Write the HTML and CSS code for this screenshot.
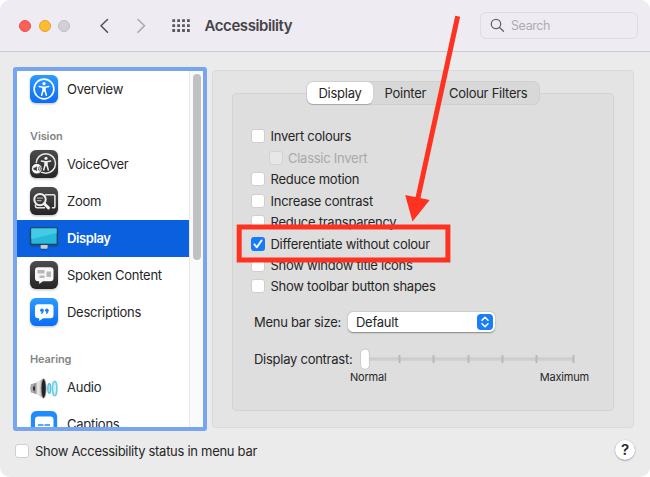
FILE: index.html
```html
<!DOCTYPE html>
<html lang="en-GB">
<head>
  <meta charset="UTF-8" />
  <meta name="viewport" content="width=device-width, initial-scale=1.0" />
  <title>Accessibility</title>
  <link rel="stylesheet" href="styles.css">
</head>
<body>
<div class="window">
  <header class="titlebar">
    <div class="lights"><i class="close"></i><i class="minimise"></i><i class="zoom"></i></div>
    <svg class="nav" width="60" height="20" viewBox="0 0 60 20" fill="none" stroke-width="1.6" stroke-linecap="round" stroke-linejoin="round">
      <path d="M13.500 3.500 7 9.800l6.500 6.500" stroke="#555"/>
      <path d="M44 3.500l6.500 6.300L44 16.300" stroke="#aaa"/>
    </svg>
    <svg class="grid" width="18" height="14" viewBox="0 0 18 14" stroke="#5a585c" stroke-width="2.800" stroke-dasharray="2.800 2.100">
      <path d="M.3 1.700h17.700M.3 6.600h17.700M.3 11.500h17.700"/>
    </svg>
    <h1>Accessibility</h1>
    <div class="search">
      <svg width="15" height="15" viewBox="0 0 15 15" fill="none" stroke="#666" stroke-width="1.300" stroke-linecap="round"><circle cx="6" cy="6" r="4.700"/><path d="M9.500 9.500l4 3.700"/></svg>
      <span>Search</span>
    </div>
  </header>

  <main>
    <nav class="sidebar">
      <div class="list">
        <div class="row first">
          <svg class="icon" viewBox="0 0 28 28">
            <defs>
              <linearGradient id="blue" x2="0" y2="1"><stop stop-color="#2d9bff"/><stop offset="1" stop-color="#0a6df5"/></linearGradient>
              <linearGradient id="dark" x2="0" y2="1"><stop stop-color="#4c4c4c"/><stop offset="1" stop-color="#252525"/></linearGradient>
            </defs>
            <rect width="28" height="28" rx="6" fill="url(#blue)"/>
            <circle cx="14" cy="14" r="9.900" fill="none" stroke="#fff" stroke-width="1.600"/>
            <circle cx="14" cy="8.700" r="1.600" fill="#fff"/>
            <path d="M9.200 11.600l3.800.6h2l3.800-.6M13 12.500v3L11.600 20.300M15 12.500v3l1.400 4.800M14 12.200v3.800" fill="none" stroke="#fff" stroke-width="1.500" stroke-linecap="round" stroke-linejoin="round"/>
          </svg>
          <span>Overview</span>
        </div>
        <h2>Vision</h2>
        <div class="row">
          <svg class="icon" viewBox="0 0 28 28">
            <rect width="28" height="28" rx="6" fill="url(#dark)"/>
            <circle cx="15.800" cy="13.500" r="9.700" fill="none" stroke="#e8e8e8" stroke-width="1.500"/>
            <circle cx="16" cy="8.300" r="1.600" fill="#eee"/>
            <path d="M11.400 11.100l3.600.7h2l3.600-.7M15 12v3L13.700 20M17 12v3l1.300 5M16 12v3.600" fill="none" stroke="#eee" stroke-width="1.500" stroke-linecap="round" stroke-linejoin="round"/>
            <circle cx="6.800" cy="18.700" r="5.400" fill="#f4f4f4" stroke="#333"/>
            <path d="M3.500 17.700h1.400l1.900-1.500v5l-1.900-1.500H3.500z" fill="#333"/>
            <path d="M8.200 17.200q1 1.500 0 3M9.600 16.200q1.800 2.500 0 5" fill="none" stroke="#333" stroke-width=".8"/>
          </svg>
          <span>VoiceOver</span>
        </div>
        <div class="row">
          <svg class="icon" viewBox="0 0 28 28">
            <rect width="28" height="28" rx="6" fill="url(#dark)"/>
            <path d="M15 7.700h8.500q1.400 0 1.400 1.400v10.300q0 1.400-1.400 1.400h-1.700M5.500 17.500v1.800q0 1.500 1.500 1.500h8" fill="none" stroke="#e4e4e4" stroke-width="1.600"/>
            <circle cx="10" cy="12.600" r="5.700" fill="#3a3a3a" stroke="#f0f0f0" stroke-width="2"/>
            <path d="M14.300 16.700l4.200 4.200" stroke="#f0f0f0" stroke-width="3" stroke-linecap="round"/>
            <path d="M7 11.200h6M6.800 13.600h4.700" stroke="#aaa" stroke-width="1.300"/>
          </svg>
          <span>Zoom</span>
        </div>
        <div class="row selected">
          <svg class="icon" viewBox="0 0 28 28">
            <path d="M10.800 19h6.800v4.700q0 1-1 1h-5q-1 0-1-1z" fill="#c8cbd0"/>
            <rect x=".2" y="3.300" width="27.500" height="17.700" rx="1" fill="#28414d"/>
            <rect x="1.300" y="4.400" width="25.300" height="15.300" fill="#27b9db"/>
            <path d="M1.300 4.400h25.300V9L1.300 15z" fill="#43cbe6"/>
          </svg>
          <span>Display</span>
        </div>
        <div class="row">
          <svg class="icon" viewBox="0 0 28 28">
            <rect width="28" height="28" rx="6" fill="url(#dark)"/>
            <path d="M8 6.200h12.500q3 0 3 3v8q0 3-3 3H13L9.200 23v-2.800H8q-3 0-3-3v-8q0-3 3-3z" fill="#f7f7f7"/>
            <path d="M7.500 9h7v3.600h-7zM16.500 10.500h4.500v5.500h-4.500zM9.500 14.500h5v2.500h-5z" fill="#b8b8b8"/>
          </svg>
          <span>Spoken Content</span>
        </div>
        <div class="row">
          <svg class="icon" viewBox="0 0 28 28">
            <rect width="28" height="28" rx="6" fill="url(#blue)"/>
            <path d="M8 6.200h12.500q3 0 3 3v8q0 3-3 3H13L9.200 23v-2.800H8q-3 0-3-3v-8q0-3 3-3z" fill="#fff"/>
            <circle cx="11.900" cy="12.300" r="1.800" fill="#1680fb"/><circle cx="16.800" cy="12.300" r="1.800" fill="#1680fb"/>
            <path d="M13.100 12.300q.2 2.300-2 3.200M18 12.300q.2 2.300-2 3.200" fill="none" stroke="#1680fb" stroke-width="1.200"/>
          </svg>
          <span>Descriptions</span>
        </div>
        <h2 class="hearing">Hearing</h2>
        <div class="row">
          <svg class="icon flat" viewBox="0 0 28 28">
            <defs><linearGradient id="cone"><stop stop-color="#777"/><stop offset=".4" stop-color="#eee"/><stop offset="1" stop-color="#aaa"/></linearGradient></defs>
            <path d="M1 11l5-1v11l-5-1.500q-1.500-4 0-8.500z" fill="#aaa"/>
            <path d="M4.500 10.500L13 5.700v19.600L4.500 20z" fill="url(#cone)"/>
            <path d="M3 13.500h2v4H3z" fill="#333"/>
            <ellipse cx="13.600" cy="15.500" rx="2.500" ry="9.700" fill="#222" stroke="#999" stroke-width=".8"/>
            <ellipse cx="19.300" cy="15.500" rx="1.500" ry="4.800" fill="#a7e3ee" stroke="#43bfd4" stroke-width="1.200"/>
            <ellipse cx="24.700" cy="15.500" rx="2.200" ry="7.300" fill="#d2f0f5" stroke="#6ccfdf" stroke-width="1.600"/>
          </svg>
          <span>Audio</span>
        </div>
        <div class="row">
          <svg class="icon" viewBox="0 0 28 28">
            <rect x="1" y="1" width="26" height="27" rx="5.500" fill="#1e8cff"/>
            <rect x="5" y="6.500" width="18.500" height="16" rx="3" fill="#fff"/>
            <path d="M8 15h5.500M14.500 15H20M8 18h12" stroke="#1e8cff" stroke-width="1.400"/>
          </svg>
          <span>Captions</span>
        </div>
      </div>
      <div class="track"><div class="thumb"></div></div>
    </nav>

    <section class="panel">
      <div class="group">
        <div class="tabs"><span class="active">Display</span><span class="pointer">Pointer</span><span class="filters">Colour Filters</span></div>
        <div class="options">
          <div class="check"><i></i><span>Invert colours</span></div>
          <div class="check disabled"><i></i><span>Classic Invert</span></div>
          <div class="check"><i></i><span>Reduce motion</span></div>
          <div class="check"><i></i><span>Increase contrast</span></div>
          <div class="check"><i></i><span>Reduce transparency</span></div>
          <div class="check on"><i><svg width="14" height="14" viewBox="0 0 14 14" fill="none" stroke="#fff" stroke-width="1.900" stroke-linecap="round" stroke-linejoin="round"><path d="M3.400 7.400l2.500 2.900L10.500 3.500"/></svg></i><span>Differentiate without colour</span></div>
          <div class="check"><i></i><span>Show window title icons</span></div>
          <div class="check"><i></i><span>Show toolbar button shapes</span></div>
        </div>
        <div class="field">
          <span class="size-label">Menu bar size:</span>
          <div class="select"><span>Default</span>
            <svg width="16" height="16" viewBox="0 0 16 16"><rect width="16" height="16" rx="4" fill="#1a7dfa"/><path d="M5 6.300l3-3 3 3M5 9.700l3 3 3-3" fill="none" stroke="#fff" stroke-width="1.600" stroke-linecap="round" stroke-linejoin="round"/></svg>
          </div>
        </div>
        <div class="field contrast">
          <span class="contrast-label">Display contrast:</span>
          <svg width="216" height="22" viewBox="0 0 216 22">
            <path d="M5 11h209" stroke="#cecece" stroke-width="3.500"/>
            <path d="M39.500 7v8M73.500 7v8M108.500 7v8M142.500 7v8M176.500 7v8M213.500 7v8" stroke="#b9b9b9" stroke-width="2"/>
            <rect x=".6" y="1.200" width="8.800" height="20" rx="4" fill="#fff" stroke="#bbb" stroke-width=".7"/>
          </svg>
        </div>
        <div class="scale"><span>Normal</span><span>Maximum</span></div>
      </div>
    </section>
  </main>

  <footer>
    <div class="check"><i></i><span>Show Accessibility status in menu bar</span></div>
    <div class="help">?</div>
  </footer>

  <svg class="callout" width="650" height="477" viewBox="0 0 650 477">
    <path d="M457.700 16.200L417.500 200" stroke="#ff3120" stroke-width="5" fill="none"/>
    <path d="M405.200 195l24.500 5-17.200 21.500z" fill="#ff3120"/>
    <rect x="239.200" y="227" width="208.700" height="33" fill="none" stroke="#ff3120" stroke-width="5"/>
  </svg>
</div>
</body>
</html>
```
FILE: styles.css
```css
* { box-sizing: border-box; }
body { margin: 0; background: #fff; font-family: Inter, "Liberation Sans", sans-serif; font-size: 13px; line-height: 16px; letter-spacing: -.26px; color: #262626; }
.window { position: relative; width: 650px; height: 477px; background: #ebebeb; border-radius: 10px; overflow: hidden; white-space: nowrap; display: flex; flex-direction: column; }

.titlebar { height: 52px; background: #eeebf2; border-bottom: 1px solid #cdcbcf; display: flex; align-items: center; padding: 0 12px 0 19px; flex: none; }
.lights { display: flex; gap: 7.5px; width: 75px; }
.lights i { width: 12px; height: 12px; border-radius: 50%; border: 1px solid #e2524b; background: #ff5f57; }
.lights .minimise { background: #febc2e; border-color: #e0a33c; }
.lights .zoom { background: #d3d1d6; border-color: #bfbdc2; }
.nav { margin-right: 18px; }
.grid { margin-right: 14.5px; }
h1 { margin: 0; font-size: 15px; font-weight: 600; color: #454347; letter-spacing: -.42px; flex: 1; }
.search { width: 158px; height: 27px; border: 1px solid #dedbe2; border-radius: 6px; display: flex; align-items: center; padding-left: 9px; gap: 6px; color: #aeabb2; margin-bottom: 1px; letter-spacing: -.6px; }
.search span { padding-top: 1px; font-size: 12.5px; letter-spacing: -.4px; }

main { display: flex; gap: 5px; padding: 15px 15px 0 13px; height: 380px; flex: none; }
.sidebar { width: 194px; height: 364px; border: 4px solid #77a5f0; border-radius: 3px; background: #fff; display: flex; overflow: hidden; }
.list { width: 172px; flex: none; }
.row { height: 37px; display: flex; align-items: center; padding: 0 0 2px 13px; gap: 9px; }
.first { height: 38px; }
.icon { width: 28px; height: 28px; flex: none; filter: drop-shadow(0 1px 1px #0004); }
.flat { filter: none; }
.selected { background: #0b60df; color: #fff; font-weight: 600; letter-spacing: -.4px; }
h2 { margin: 0; height: 37px; padding: 19px 0 0 13px; font-size: 11px; line-height: 16px; font-weight: 600; color: #858585; letter-spacing: -.1px; }
.hearing { height: 38px; padding-top: 20px; }
.track { flex: 1; background: #fafafa; border-left: 1px solid #e8e8e8; padding: 3px 0 0 3px; }
.thumb { width: 8px; height: 186px; border-radius: 4px; background: #c1c1c1; }

.panel { width: 422px; height: 358px; margin-top: 3px; background: #e4e4e4; border: 1px solid #dadada; border-radius: 4px; padding: 22px 19px 0; }
.group { height: 318px; background: #dedede; border: 1px solid #d3d3d3; border-radius: 4px; }
.tabs { display: flex; width: 232px; height: 22px; margin: -12px 0 0 74px; background: #d8d8d8; border-radius: 6px; box-shadow: 0 0 0 1px #cfcfcf; line-height: 22px; }
.tabs .active { width: 66px; background: #fff; border-radius: 6px; text-align: center; box-shadow: 0 1px 1px #0003; }
.pointer { width: 64px; padding-left: 11.5px; }
.filters { padding-left: 12px; }
.options { padding: 21.7px 0 0 18px; }
.check { display: flex; align-items: center; gap: 5.5px; height: 21.45px; }
.check i { width: 14px; height: 14px; border-radius: 3px; background: #fff; border: 1px solid #cfcfcf; flex: none; }
.disabled { margin-left: 17.5px; color: #a9a9a9; }
.disabled i { background: #e7e7e7; border-color: #d2d2d2; }
.check.on i { background: #167bfa; border: 0; }
.on svg { display: block; }
.field { display: flex; align-items: center; height: 22px; margin: 14px 0 0 21px; }
.size-label { width: 94px; }
.select { width: 147px; height: 20px; border-radius: 5px; background: #fff; box-shadow: 0 .5px 1.5px #0006; display: flex; align-items: center; justify-content: space-between; padding: 0 2px 0 8px; }
.contrast { margin-top: 15px; }
.contrast-label { width: 106px; }
.scale { display: flex; justify-content: space-between; width: 239px; margin: -1px 0 0 117px; font-size: 11px; letter-spacing: -.2px; }

footer { display: flex; justify-content: space-between; padding: 8px 15px 0; }
footer .check { height: 22px; gap: 6px; letter-spacing: -.29px; }
.help { width: 20px; height: 20px; border-radius: 50%; background: #fff; box-shadow: 0 .5px 1.5px #0007; text-align: center; line-height: 20px; font-size: 15px; font-weight: 600; }
.callout { position: absolute; left: 0; top: 0; }
```
